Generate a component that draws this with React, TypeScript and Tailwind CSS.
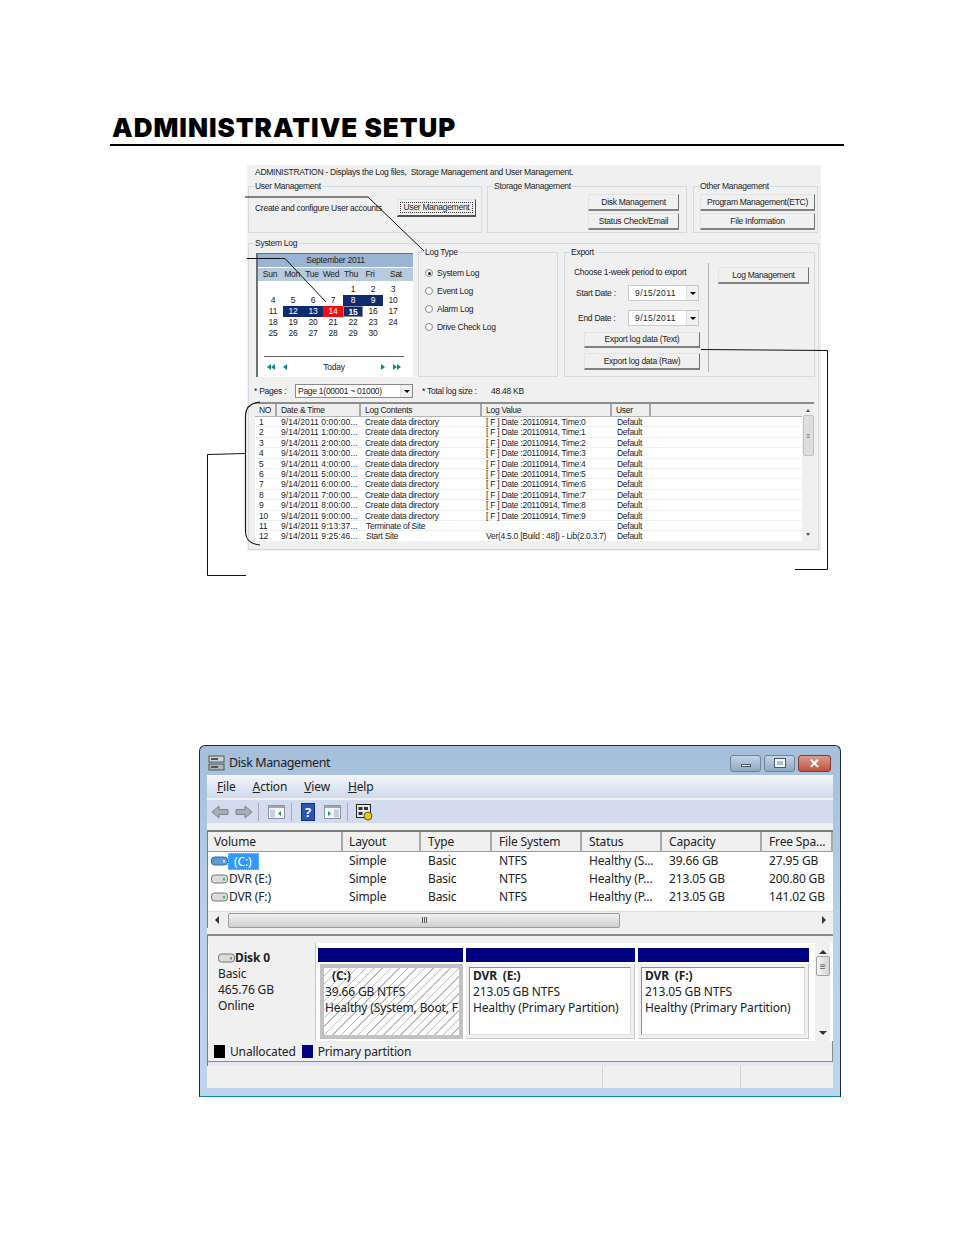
const logRows = [
  ["1", "9/14/2011 0:00:00...", "Create data directory", "[ F ] Date :20110914, Time:0"],
  ["2", "9/14/2011 1:00:00...", "Create data directory", "[ F ] Date :20110914, Time:1"],
  ["3", "9/14/2011 2:00:00...", "Create data directory", "[ F ] Date :20110914, Time:2"],
  ["4", "9/14/2011 3:00:00...", "Create data directory", "[ F ] Date :20110914, Time:3"],
  ["5", "9/14/2011 4:00:00...", "Create data directory", "[ F ] Date :20110914, Time:4"],
  ["6", "9/14/2011 5:00:00...", "Create data directory", "[ F ] Date :20110914, Time:5"],
  ["7", "9/14/2011 6:00:00...", "Create data directory", "[ F ] Date :20110914, Time:6"],
  ["8", "9/14/2011 7:00:00...", "Create data directory", "[ F ] Date :20110914, Time:7"],
  ["9", "9/14/2011 8:00:00...", "Create data directory", "[ F ] Date :20110914, Time:8"],
  ["10", "9/14/2011 9:00:00...", "Create data directory", "[ F ] Date :20110914, Time:9"],
  ["11", "9/14/2011 9:13:37...", "Terminate of Site", ""],
  ["12", "9/14/2011 9:25:46...", "Start Site", "Ver(4.5.0 [Build : 48]) - Lib(2.0.3.7)"],
];

const logCols = ["NO", "Date & Time", "Log Contents", "Log Value", "User", ""];
const days = ["Sun", "Mon", "Tue", "Wed", "Thu", "Fri", "Sat"];
const diskCols = ["Volume", "Layout", "Type", "File System", "Status", "Capacity", "Free Spa..."];
const volumes = [
  ["(C:)", "Simple", "Basic", "NTFS", "Healthy (S...", "39.66 GB", "27.95 GB"],
  ["DVR (E:)", "Simple", "Basic", "NTFS", "Healthy (P...", "213.05 GB", "200.80 GB"],
  ["DVR (F:)", "Simple", "Basic", "NTFS", "Healthy (P...", "213.05 GB", "141.02 GB"],
];

function dayClass(d: number) {
  if (d === 8 || d === 9 || d === 12 || d === 13) return "bg-[#0f2a6e] text-white";
  if (d === 14) return "bg-[#f01010] text-white";
  if (d === 15) return "bg-[#0f2a6e] text-white border border-[#8a8f9e] font-bold";
  return "";
}

function Group({ label, className, children }: { label: string; className: string; children?: React.ReactNode }) {
  return (
    <div className={"relative border border-[#d4dbe0] " + className}>
      <span className="absolute -top-[6px] left-[5px] bg-[#f0f0f0] px-[1px] leading-[10px]">{label}</span>
      {children}
    </div>
  );
}

function Btn({ label, className }: { label: string; className: string }) {
  return (
    <div className={"flex items-center justify-center bg-[#f0f0f0] border border-[#e4e4e4] border-r-[#707070] border-b-2 border-b-[#808080] leading-none " + className}>
      {label}
    </div>
  );
}

function Combo({ value, className, valueClass }: { value: string; className: string; valueClass: string }) {
  return (
    <div className={"flex items-center bg-white border border-[#c9c9c9] " + className}>
      <span className={"flex-1 whitespace-nowrap " + valueClass}>{value}</span>
      <span className="w-[12px] h-full flex items-center justify-center bg-[#f0f0f0] border-l border-[#e0e0e0]">
        <span className="border-x-[3px] border-x-transparent border-t-[3px] border-t-black" />
      </span>
    </div>
  );
}

function Radio({ label, checked }: { label: string; checked?: boolean }) {
  return (
    <div className="flex items-center h-[10px] leading-[10px]">
      <span className="w-[8px] h-[8px] rounded-full border border-[#8a8a8a] bg-white flex items-center justify-center mr-[4px]">
        {checked && <span className="w-[3px] h-[3px] rounded-full bg-black" />}
      </span>
      {label}
    </div>
  );
}

function NavArrows({ flip, double }: { flip?: boolean; double?: boolean }) {
  return (
    <svg width={double ? 8 : 4} height="6" viewBox={double ? "0 0 8 6" : "0 0 4 6"} className={flip ? "-scale-x-100" : ""} fill="#0a8a8a">
      <path d="M0 3l4-3v6z" />
      {double && <path d="M4 3l4-3v6z" />}
    </svg>
  );
}

function Calendar() {
  const cells = Array.from({ length: 30 }, (_, i) => i + 1);
  return (
    <div className="w-[157px] h-[124px] mt-[1px] bg-white border-l-2 border-t border-[#6e6e6e]">
      <div className="h-[13px] bg-[#9bb4d3] flex items-center justify-center leading-none">September 2011</div>
      <div className="h-[13px] mt-[1px] bg-[#b8cadd] pl-[1px] grid grid-cols-[22px_22px_18px_20px_20px_18px_34px] items-center text-center leading-none">
        {days.map((d) => (
          <span key={d}>{d}</span>
        ))}
      </div>
      <div className="grid grid-cols-[repeat(7,20px)] auto-rows-[11px] pl-[5px] pt-[3px] h-[58px] text-center leading-[11px]">
        {[0, 1, 2, 3].map((i) => (
          <span key={i} />
        ))}
        {cells.map((d) => (
          <span key={d} className={dayClass(d)}>
            {d}
          </span>
        ))}
      </div>
      <div className="ml-[6px] mr-[9px] mt-[17px] border-t border-[#666] h-[21px] flex items-center justify-between px-[3px]">
        <span className="flex items-center gap-[8px]">
          <NavArrows double />
          <NavArrows />
        </span>
        <span className="text-[#222]">Today</span>
        <span className="flex items-center gap-[8px]">
          <NavArrows flip />
          <NavArrows flip double />
        </span>
      </div>
    </div>
  );
}

function LogTable() {
  return (
    <div className="flex w-[559px] h-[139px] ml-[-1px] mt-[4px] border-t-2 border-[#8c8c8c] bg-white">
      <div className="flex-1">
        <div className="grid grid-cols-[22px_84px_121px_130px_39px_1fr] h-[13px] bg-[#eeeeee] border-b border-[#b5b5b5]">
          {logCols.map((c, i) => (
            <div key={i} className={"pl-[4px] leading-[12px] " + (i < 5 ? "border-r-2 border-[#a8a8a8]" : "")}>
              {c}
            </div>
          ))}
        </div>
        {logRows.map((r) => (
          <div key={r[0]} className="grid grid-cols-[22px_84px_121px_130px_39px_1fr] h-[10.4px] border-b border-[#eef1f4] leading-[10px]">
            <div className="pl-[4px]">{r[0]}</div>
            <div className="pl-[4px] whitespace-nowrap tracking-[0.08px]">{r[1]}</div>
            <div className={"whitespace-nowrap " + (Number(r[0]) > 10 ? "pl-[5px]" : "pl-[4px]")}>{r[2]}</div>
            <div className="pl-[4px] whitespace-nowrap">{r[3]}</div>
            <div className="pl-[5px]">Default</div>
            <div />
          </div>
        ))}
      </div>
      <div className="w-[12px] bg-[#f0f0f0] flex flex-col items-center">
        <span className="mt-[5px] border-x-[2px] border-x-transparent border-b-[3px] border-b-[#555]" />
        <span className="w-[11px] h-[41px] mt-[3px] bg-[#dedede] border border-[#c0c0c0] rounded-[2px] flex items-center justify-center text-[6px] leading-none text-[#555]">≡</span>
        <span className="mt-auto mb-[5px] border-x-[2px] border-x-transparent border-t-[3px] border-t-[#555]" />
      </div>
    </div>
  );
}

function AdminScreen() {
  return (
    <section className="w-[574px] h-[386px] mt-[19px] ml-[247px] bg-[#f0f0f0] text-[8.5px] tracking-[-0.27px] text-[#222] font-['Liberation_Sans',sans-serif]">
      <p className="h-[21px] pl-[8px] pt-[2px] leading-[10px] whitespace-pre">ADMINISTRATION - Displays the Log files,  Storage Management and User Management.</p>
      <div className="flex h-[47px] pl-[1px]">
        <Group label="User Management" className="w-[234px] flex items-center justify-between pl-[6px] pr-[5px] pb-[3px]">
          <span>Create and configure User accounts</span>
          <div className="w-[79px] h-[18px] p-[2px] bg-[#f0f0f0] border border-[#e4e4e4] border-r-[#505050] border-b-2 border-b-[#505050]">
            <div className="h-full flex items-center justify-center border border-dotted border-[#333] leading-none">User Management</div>
          </div>
        </Group>
        <Group label="Storage Management" className="w-[200px] ml-[5px] flex flex-col items-end gap-[2px] pt-[7px] pr-[7px]">
          <Btn label="Disk Management" className="w-[91px] h-[17px]" />
          <Btn label="Status Check/Email" className="w-[91px] h-[17px]" />
        </Group>
        <Group label="Other Management" className="w-[125px] ml-[6px] flex flex-col items-end gap-[2px] pt-[7px] pr-[2px]">
          <Btn label="Program Management(ETC)" className="w-[115px] h-[17px]" />
          <Btn label="File Information" className="w-[115px] h-[17px]" />
        </Group>
      </div>
      <Group label="System Log" className="w-[571px] h-[307px] mt-[10px] ml-[1px] pt-[8px] pl-[7px]">
        <div className="flex h-[125px]">
          <Calendar />
          <Group label="Log Type" className="w-[140px] ml-[5px] flex flex-col gap-[8px] pt-[15px] pl-[6px]">
            <Radio label="System Log" checked />
            <Radio label="Event Log" />
            <Radio label="Alarm Log" />
            <Radio label="Drive Check Log" />
          </Group>
          <Group label="Export" className="w-[251px] ml-[6px] flex">
            <div className="w-[143px] flex flex-col pt-[14px]">
              <span className="pl-[9px] leading-[10px] whitespace-nowrap">Choose 1-week period to export</span>
              <div className="flex items-center mt-[8px] h-[16px]">
                <span className="w-[62px] pl-[11px]">Start Date :</span>
                <Combo value="9/15/2011" valueClass="pl-[6px] tracking-[0.4px]" className="w-[71px] h-[16px] ml-[1px]" />
              </div>
              <div className="flex items-center mt-[9px] h-[16px]">
                <span className="w-[62px] pl-[13px]">End Date :</span>
                <Combo value="9/15/2011" valueClass="pl-[6px] tracking-[0.4px]" className="w-[71px] h-[16px] ml-[1px]" />
              </div>
              <Btn label="Export log data (Text)" className="w-[116px] h-[16px] mt-[6px] ml-[19px]" />
              <Btn label="Export log data (Raw)" className="w-[116px] h-[17px] mt-[5px] ml-[19px]" />
            </div>
            <div className="w-[1px] h-[109px] mt-[10px] bg-[#b4b4b4]" />
            <div className="pl-[9px] pt-[14px]">
              <Btn label="Log Management" className="w-[91px] h-[17px]" />
            </div>
          </Group>
        </div>
        <div className="flex items-center h-[14px] mt-[7px] ml-[-2px]">
          <span className="w-[41px] whitespace-nowrap">* Pages :</span>
          <Combo value="Page 1(00001 ~ 01000)" valueClass="pl-[2px]" className="w-[118px] h-[14px] !border-[#8a8a8a]" />
          <span className="w-[69px] ml-[9px] whitespace-nowrap">* Total log size :</span>
          <span>48.48 KB</span>
        </div>
        <LogTable />
      </Group>
    </section>
  );
}

function Drive({ blue }: { blue?: boolean }) {
  return (
    <svg width="17" height="10" viewBox="0 0 17 10" className="shrink-0">
      <rect x="0.5" y="1" width="16" height="8" rx="3" fill={blue ? "#5b9bd5" : "#dcdcdc"} stroke={blue ? "#2f6ea8" : "#777"} />
      <rect x="12" y="4" width="2" height="2.5" fill={blue ? "#cfe8ff" : "#53b04f"} />
    </svg>
  );
}

function PanelIcon({ flip }: { flip?: boolean }) {
  return (
    <svg width="17" height="14" viewBox="0 0 17 14">
      <rect x="0.5" y="0.5" width="16" height="13" fill="#f4f6fa" stroke="#8b94a3" />
      <rect x="1" y="1" width="15" height="2" fill="#9aa5b8" />
      <rect x={flip ? 10 : 2} y="4.5" width="5" height="8" fill="#c9d0dc" />
      <path d={flip ? "M4 6l3 2.5L4 11z" : "M13 6l-3 2.5L13 11z"} fill="#2d9a46" />
    </svg>
  );
}

function Arrow({ flip }: { flip?: boolean }) {
  return (
    <svg width="18" height="14" viewBox="0 0 18 14" className={flip ? "-scale-x-100" : ""}>
      <path d="M1 7l7-6v3.500h9v5H8V13z" fill="#a9aeb6" stroke="#7f858e" />
    </svg>
  );
}

function Sep() {
  return <span className="w-[1px] h-[18px] bg-[#a6adba]" />;
}

function Partition({ name, size, status, width }: { name: string; size: string; status: string; width: string }) {
  return (
    <div className={width}>
      <div className="h-[14px] bg-[#000080]" />
      <div className="h-[75px] mt-[2px] p-[3px] bg-[#f0f0f0] border-r border-b border-[#c8c8c8]">
        <div className="h-full bg-white border border-[#8e8e8e] border-r-[#dedede] border-b-[#dedede] pl-[3px] leading-[16px]">
          <div className="font-bold whitespace-pre">{name}</div>
          <div>{size}</div>
          <div className="whitespace-nowrap">{status}</div>
        </div>
      </div>
    </div>
  );
}

function DiskWindow() {
  return (
    <section className="flex flex-col w-[642px] h-[352px] mt-[194px] ml-[199px] px-[7px] pb-[8px] border border-[#1d2b36] border-b-[#0f8aa0] rounded-t-[6px] bg-gradient-to-b from-[#a5bfda] via-[#b8d0e8] to-[#bcd5ec] text-[12px] tracking-[-0.15px] text-[#222] font-['Noto_Sans',sans-serif]">
      <div className="flex items-center h-[29px] pt-[5px] shrink-0">
        <svg width="18" height="16" viewBox="0 0 18 16" className="ml-[1px]">
          <rect x="1" y="1" width="15" height="6" fill="#cfd3d8" stroke="#555" />
          <rect x="1" y="9" width="15" height="6" fill="#aeb4bb" stroke="#555" />
          <rect x="3" y="3" width="7" height="2" fill="#555" />
          <rect x="3" y="11" width="7" height="2" fill="#555" />
        </svg>
        <span className="ml-[3px] text-[12.5px] tracking-[-0.4px]">Disk Management</span>
        <div className="flex ml-auto mr-[2px] gap-[3px]">
          <div className="w-[31px] h-[17px] flex items-center justify-center rounded-[3px] border border-[#6f8296] bg-gradient-to-b from-[#c3d4e6] to-[#8fa9c4]">
            <span className="w-[10px] h-[3px] mt-[4px] bg-white border border-[#4a5a6a]" />
          </div>
          <div className="w-[31px] h-[17px] flex items-center justify-center rounded-[3px] border border-[#6f8296] bg-gradient-to-b from-[#c3d4e6] to-[#8fa9c4]">
            <span className="w-[10px] h-[8px] border-2 border-[#f4f7fa] outline outline-1 outline-[#4a5a6a]" />
          </div>
          <div className="w-[33px] h-[17px] flex items-center justify-center rounded-[3px] border border-[#7a3d36] bg-gradient-to-b from-[#dc9a8c] to-[#c0503e] text-white text-[13px] font-bold leading-none">✕</div>
        </div>
      </div>
      <div className="flex-1 flex flex-col bg-[#f0f0f0]">
        <div className="h-[23px] flex items-center bg-gradient-to-b from-[#f3f6fb] to-[#cfd9ec]">
          <span className="ml-[10px]"><span className="underline">F</span>ile</span>
          <span className="ml-[17px]"><span className="underline">A</span>ction</span>
          <span className="ml-[17px]"><span className="underline">V</span>iew</span>
          <span className="ml-[18px]"><span className="underline">H</span>elp</span>
        </div>
        <div className="h-[23px] mt-[2px] pt-[1px] flex items-center pl-[4px] bg-[#d3dcef]">
          <Arrow />
          <span className="w-[6px]" />
          <Arrow flip />
          <span className="w-[5px]" />
          <Sep />
          <span className="w-[9px]" />
          <PanelIcon />
          <span className="w-[6px]" />
          <Sep />
          <span className="w-[9px]" />
          <span className="w-[14px] h-[18px] flex items-center justify-center bg-[#2a55b8] border border-[#16307a] text-white text-[13px] font-bold leading-none">?</span>
          <span className="w-[9px]" />
          <PanelIcon flip />
          <span className="w-[6px]" />
          <Sep />
          <span className="w-[8px]" />
          <svg width="17" height="17" viewBox="0 0 17 17">
            <rect x="0.5" y="0.5" width="14" height="13" fill="#e8e8e8" stroke="#222" />
            <rect x="2.5" y="3" width="4" height="3" fill="#333" />
            <rect x="8" y="3" width="4" height="3" fill="#333" />
            <rect x="2.5" y="8" width="4" height="3" fill="#333" />
            <circle cx="12" cy="12" r="4" fill="#e6c81e" stroke="#6a5a08" />
          </svg>
        </div>
        <div className="h-[7px]" />
        <div className="border-t-2 border-l border-[#7d7d7d] bg-white">
          <div className="grid grid-cols-[135px_78px_71px_90px_80px_100px_1fr] h-[20px] bg-[#f0f0f0] border-b border-[#999]">
            {diskCols.map((c, i) => (
              <div key={c} className={"leading-[20px] border-r-2 border-[#a9a9a9] whitespace-nowrap " + (i < 2 ? "pl-[6px]" : "pl-[7px]")}>
                {c}
              </div>
            ))}
          </div>
          <div className="h-[59px]">
            {volumes.map((v, i) => (
              <div key={v[0]} className="grid grid-cols-[135px_78px_71px_90px_80px_100px_1fr] h-[18px] leading-[18px]">
                <div className="flex items-center pl-[3px]">
                  <Drive blue={i === 0} />
                  {i === 0 ? (
                    <span className="w-[31px] h-[17px] pl-[5px] bg-[#3399ff] text-white border border-dotted border-[#9cc] leading-[16px]">{v[0]}</span>
                  ) : (
                    <span className="ml-[1px]">{v[0]}</span>
                  )}
                </div>
                {v.slice(1).map((c, j) => (
                  <div key={j} className={"whitespace-nowrap " + (j === 0 ? "pl-[6px]" : "pl-[7px]")}>
                    {c}
                  </div>
                ))}
              </div>
            ))}
          </div>
          <div className="h-[17px] flex items-center bg-[#f0f0f0] border-t border-[#ddd] px-[7px]">
            <span className="border-y-[4px] border-y-transparent border-r-[4px] border-r-[#333]" />
            <div className="w-[392px] h-[15px] ml-[9px] flex items-center justify-center gap-[1px] rounded-[2px] bg-gradient-to-b from-[#f2f2f2] to-[#cfcfcf] border border-[#9a9a9a]">
              <span className="w-[1px] h-[6px] bg-[#555]" />
              <span className="w-[1px] h-[6px] bg-[#555]" />
              <span className="w-[1px] h-[6px] bg-[#555]" />
            </div>
            <span className="ml-auto border-y-[4px] border-y-transparent border-l-[4px] border-l-[#333]" />
          </div>
        </div>
        <div className="h-[6px]" />
        <div className="h-[2px] bg-[#8a8a8a]" />
        <div className="flex-1 border-l border-[#7d7d7d] flex flex-col">
          <div className="flex h-[98px] mt-[7px] bg-white">
            <div className="w-[107px] ml-[1px] bg-[#f0f0f0] pl-[9px] pt-[6px] leading-[16px] border-r border-[#c8c8c8]">
              <div className="flex items-center h-[17px] font-bold">
                <Drive />
                <span>Disk 0</span>
              </div>
              <div>Basic</div>
              <div>465.76 GB</div>
              <div>Online</div>
            </div>
            <div className="flex gap-[3px] pt-[5px] pl-[2px]">
              <div className="w-[145px]">
                <div className="h-[14px] bg-[#000080]" />
                <div className="h-[75px] mt-[2px] ml-[2px] border-4 border-[#c2c2c2] bg-[repeating-linear-gradient(135deg,#fff_0,#fff_5px,#bdbdbd_5px,#bdbdbd_6px)] leading-[16px] overflow-hidden whitespace-nowrap pl-[1px]">
                  <div className="font-bold pl-[7px]">(C:)</div>
                  <div>39.66 GB NTFS</div>
                  <div>Healthy (System, Boot, F</div>
                </div>
              </div>
              <Partition name="DVR  (E:)" size="213.05 GB NTFS" status="Healthy (Primary Partition)" width="w-[169px]" />
              <Partition name="DVR  (F:)" size="213.05 GB NTFS" status="Healthy (Primary Partition)" width="w-[171px]" />
            </div>
            <div className="w-[15px] ml-auto mr-[3px] bg-[#f0f0f0] flex flex-col items-center">
              <span className="mt-[7px] border-x-[4px] border-x-transparent border-b-[4px] border-b-[#333]" />
              <span className="w-[14px] h-[20px] mt-[2px] rounded-[2px] bg-gradient-to-r from-[#f4f4f4] to-[#d6d6d6] border border-[#a0a0a0] flex items-center justify-center text-[10px] leading-none text-[#555]">≡</span>
              <span className="mt-auto mb-[6px] border-x-[4px] border-x-transparent border-t-[4px] border-t-[#333]" />
            </div>
          </div>
          <div className="h-[21px] flex items-center pl-[6px] pt-[1px] border-b border-r border-[#8a8a8a]">
            <span className="w-[11px] h-[13px] bg-black" />
            <span className="ml-[5px]">Unallocated</span>
            <span className="w-[11px] h-[13px] ml-[6px] bg-[#000080]" />
            <span className="ml-[5px]">Primary partition</span>
          </div>
          <div className="h-[4px] bg-[#e4e8ee]" />
        </div>
        <div className="flex h-[22px] bg-[#f0f0f0]">
          <div className="w-[396px] border-r border-[#d2d2d2]" />
          <div className="w-[138px] border-r border-[#d2d2d2]" />
        </div>
      </div>
    </section>
  );
}

export default function App() {
  return (
    <div className="relative w-[954px] h-[1235px] bg-white overflow-hidden pt-[112px]">
      <h1 className="ml-[110px] w-[734px] h-[34px] border-b-2 border-black pl-[2px] text-[26px] leading-[32px] font-black tracking-[1px] text-black font-['Inter',sans-serif]">ADMINISTRATIVE SETUP</h1>
      <AdminScreen />
      <DiskWindow />
      {/* callout lines drawn over the dialog */}
      <svg width="954" height="1235" className="absolute inset-0 pointer-events-none" fill="none" stroke="#111" strokeWidth="1">
        <path d="M245 197H368L424 251" />
        <path d="M247 258.500H285L326 302" />
        <path d="M701 349.500L827.500 350.500V569.500H795" />
        <path d="M260 402C250 403 245.500 408 245.500 416V531C245.500 540 250 544 260 545" strokeWidth="1.2" />
        <path d="M245 453.500L207.500 454.500V575.500H246" />
      </svg>
    </div>
  );
}
